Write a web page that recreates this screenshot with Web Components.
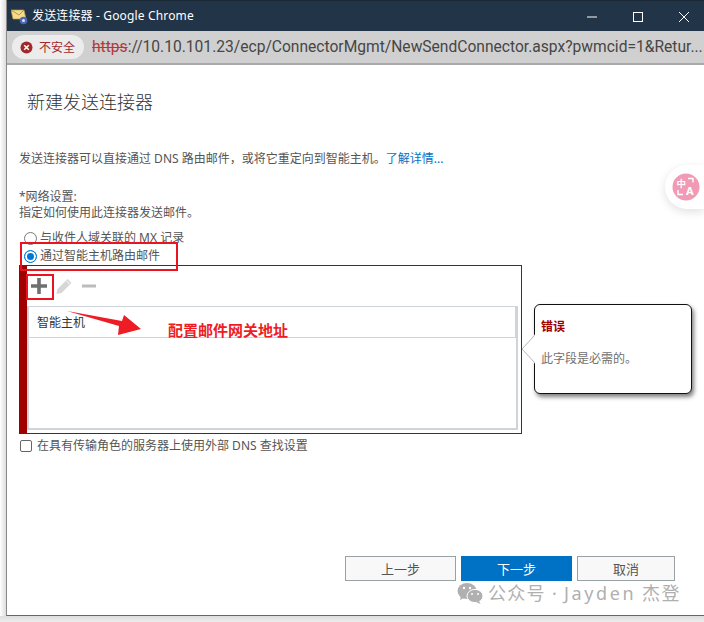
<!DOCTYPE html>
<html>
<head>
<meta charset="utf-8">
<style>
    html, body { margin: 0; padding: 0; background: #fff; }
    body { width: 704px; height: 622px; overflow: hidden; font-family: "Noto Sans CJK SC", "Noto Sans", sans-serif; }
</style>
</head>
<body>
<browser-window>
    <connector-form></connector-form>
</browser-window>

<script>
const CJK = `"Noto Sans", "Noto Sans CJK SC", sans-serif`;

class TitleBar extends HTMLElement {
    constructor() {
        super();
        this.attachShadow({ mode: 'open' });
    }

    connectedCallback() {
        this.shadowRoot.innerHTML = `
            <style>
                :host {
                    display: flex; align-items: center;
                    height: 31px; box-sizing: border-box;
                    background: #223447; border-top: 1px solid #1b2836;
                    color: #fff; font: 12px ${CJK};
                    padding-left: 4px; overflow: hidden;
                }
                .app { width: 17px; height: 17px; margin-right: 4px; flex: none; }
                .title { flex: 1; letter-spacing: 0.15px; padding-bottom: 3px; }
                .controls { display: flex; align-items: center; margin-right: -3px; }
                .controls svg { display: block; width: 46px; height: 30px; }
            </style>
            <svg class="app" viewBox="0 0 17 17">
                <path d="M0 2h13l2 9H2z" fill="#f4dc8c" stroke="#b59a4a" stroke-width=".7"/>
                <path d="M0 2l8 5 5-5" fill="none" stroke="#a58a3a" stroke-width=".8"/>
                <circle cx="12.5" cy="12.5" r="3.8" fill="#4d68b8"/>
                <circle cx="12.5" cy="12.5" r="1.5" fill="#dbe4f7"/>
            </svg>
            <span class="title">发送连接器 - Google Chrome</span>
            <div class="controls">
                <svg viewBox="0 0 46 30"><path d="M18 16h10" stroke="#fff" fill="none"/></svg>
                <svg viewBox="0 0 46 30"><rect x="18.5" y="11.5" width="9" height="9" stroke="#fff" fill="none"/></svg>
                <svg viewBox="0 0 46 30"><path d="M18 11l10 10M28 11l-10 10" stroke="#fff" fill="none"/></svg>
            </div>
        `;
    }
}
customElements.define('title-bar', TitleBar);

class AddressBar extends HTMLElement {
    constructor() {
        super();
        this.attachShadow({ mode: 'open' });
    }

    connectedCallback() {
        this.shadowRoot.innerHTML = `
            <style>
                :host {
                    display: flex; align-items: center;
                    height: 34px; box-sizing: border-box;
                    background: #d0d0d0; border-bottom: 2px solid #a9a9a9;
                    padding: 0 0 0 5px;
                    font: 15.6px Roboto, ${CJK}; color: #464646;
                    white-space: nowrap; overflow: hidden;
                }
                .chip {
                    display: flex; align-items: center; gap: 6px;
                    height: 24px; padding: 0 9px 0 8px; margin-right: 8px;
                    border-radius: 12px; background: #ececec; flex: none;
                    color: #a3282a; font: 12px ${CJK};
                }
                .chip svg { width: 13px; height: 13px; }
                s { color: #b23a3a; }
            </style>
            <span class="chip">
                <svg viewBox="0 0 13 13">
                    <circle cx="6.5" cy="6.5" r="6" fill="#a3282a"/>
                    <path d="M4.2 4.2l4.6 4.6M8.8 4.2l-4.6 4.6" stroke="#fff" stroke-width="1.5"/>
                </svg>
                不安全
            </span>
            <span><s>https</s>://10.10.101.23/ecp/ConnectorMgmt/NewSendConnector.aspx?pwmcid=1&amp;Retur...</span>
        `;
    }
}
customElements.define('address-bar', AddressBar);

class BrowserWindow extends HTMLElement {
    constructor() {
        super();
        this.attachShadow({ mode: 'open' });
    }

    connectedCallback() {
        this.shadowRoot.innerHTML = `
            <style>
                :host {
                    display: block; position: relative;
                    width: 704px; height: 622px;
                    background: #fff;
                }
                .frame {
                    margin-left: 6px; height: 616px; box-sizing: border-box;
                    display: flex; flex-direction: column;
                    background: #fff;
                    border-left: 1px solid #8a8a8a;
                    border-bottom: 1px solid #666;
                }
                .shade {
                    height: 6px; background: linear-gradient(#dedede, #ececec);
                }
                .page { flex: 1; position: relative; }
                .edge {
                    position: absolute; left: 0; top: 0; width: 6px; height: 616px;
                    background: linear-gradient(to right, #fff, #ddd);
                }
            </style>
            <div class="edge"></div>
            <div class="frame">
                <title-bar></title-bar>
                <address-bar></address-bar>
                <div class="page"><slot></slot></div>
            </div>
            <div class="shade"></div>
        `;
    }
}
customElements.define('browser-window', BrowserWindow);

class ErrorCallout extends HTMLElement {
    constructor() {
        super();
        this.attachShadow({ mode: 'open' });
    }

    connectedCallback() {
        this.shadowRoot.innerHTML = `
            <style>
                :host {
                    position: absolute; left: 527px; top: 239px;
                    display: block; box-sizing: border-box;
                    width: 158px; height: 90px; padding: 14px 6px;
                    background: #fff; border: 1px solid #111; border-radius: 6px;
                    box-shadow: 2px 3px 4px rgba(0,0,0,.5);
                    font: 12px/16px ${CJK}; color: #707070;
                }
                h4 { margin: 0 0 16px; font-size: 12px; line-height: 16px; font-weight: 700; color: #a00000; }
                p { margin: 0; }
                svg { position: absolute; left: -14px; top: 29px; width: 15px; height: 30px; }
            </style>
            <svg viewBox="0 0 15 30"><path d="M14 1L1 15l13 14" fill="#fff" stroke="#b5b5b5"/><path d="M14.5 0v30" stroke="#fff" stroke-width="1.5"/></svg>
            <h4>错误</h4>
            <p>此字段是必需的。</p>
        `;
    }
}
customElements.define('error-callout', ErrorCallout);

class HostsField extends HTMLElement {
    constructor() {
        super();
        this.attachShadow({ mode: 'open' });
    }

    connectedCallback() {
        this.shadowRoot.innerHTML = `
            <style>
                :host {
                    display: block; box-sizing: border-box;
                    width: 503px; height: 169px;
                    border: 1px solid #b00000; border-left: 8px solid #a00000;
                }
                .toolbar {
                    display: flex; align-items: center; gap: 7px;
                    height: 40px; padding-left: 3px;
                }
                .toolbar svg { width: 18px; height: 18px; display: block; }
                .table {
                    box-sizing: border-box; width: 491px; height: 124px;
                    border: 2px solid #ced4da; border-top-width: 1px; background: #fff;
                }
                .head {
                    box-sizing: border-box; height: 31px;
                    border-bottom: 1px solid #ced4da;
                    border-right: 1px solid #ced4da;
                    padding-left: 8px;
                    display: flex; align-items: center;
                    font: 12px ${CJK}; color: #333;
                }
            </style>
            <div class="toolbar">
                <svg viewBox="0 0 18 18"><path d="M9 1v16M1 9h16" stroke="#707070" stroke-width="3.6"/></svg>
                <svg viewBox="0 0 18 18">
                    <path d="M1.5 17l1-5L12.5 2l4 4-10 10z" fill="#d6d6d6"/>
                    <path d="M11 3.5l4 4" stroke="#fff"/>
                </svg>
                <svg viewBox="0 0 18 18"><path d="M2 9h14" stroke="#bcbcbc" stroke-width="3"/></svg>
            </div>
            <div class="table"><div class="head">智能主机</div></div>
        `;
    }
}
customElements.define('hosts-field', HostsField);

class WizardFooter extends HTMLElement {
    constructor() {
        super();
        this.attachShadow({ mode: 'open' });
    }

    connectedCallback() {
        this.shadowRoot.innerHTML = `
            <style>
                :host {
                    display: flex; gap: 5px;
                    position: absolute; left: 338px; top: 491px;
                }
                button {
                    box-sizing: border-box; width: 111px; height: 25px; padding: 0;
                    background: #f8f8f8; border: 1px solid #98a2a4;
                    font: 13px ${CJK}; color: #555;
                }
                .primary { background: #0072c6; border-color: #0072c6; color: #fff; }
                .cancel { width: 98px; }
            </style>
            <button>上一步</button>
            <button class="primary">下一步</button>
            <button class="cancel">取消</button>
        `;
    }
}
customElements.define('wizard-footer', WizardFooter);

class ConnectorForm extends HTMLElement {
    constructor() {
        super();
        this.attachShadow({ mode: 'open' });
    }

    connectedCallback() {
        this.shadowRoot.innerHTML = `
            <style>
                :host {
                    display: block; position: absolute; inset: 0;
                    padding: 0 0 0 12px;
                    font: 12px/16px ${CJK}; color: #555;
                }
                h1 { margin: 0; padding: 25px 0 0 8px; height: 86px; box-sizing: border-box; font: 300 18px/24px ${CJK}; color: #333; }
                .intro { margin: 0; height: 38px; }
                a { color: #0072c6; text-decoration: none; }
                .section { margin: 0; }
                .radios { padding: 8px 0 0 5px; }
                label { display: flex; align-items: center; height: 18px; }
                .radio {
                    box-sizing: border-box; width: 13px; height: 13px; margin-right: 3px;
                    border: 1px solid #777; border-radius: 50%; background: #fff;
                }
                .radio.on { border-color: #0078d7; box-shadow: inset 0 0 0 2px #fff; background: #0078d7; }
                .dns { display: flex; align-items: center; gap: 5px; margin: 5px 0 0 1px; height: 14px; }
                .box { box-sizing: border-box; width: 12px; height: 12px; border: 1px solid #666; border-radius: 2px; }
                /* review marks drawn over the screenshot */
                .mark { position: absolute; border: 2px solid #e8141f; box-sizing: border-box; }
                .note {
                    position: absolute; left: 161px; top: 255px;
                    font: 700 15px/20px ${CJK}; color: #ee1c25;
                }
                .arrow { position: absolute; left: 55px; top: 244px; width: 90px; height: 30px; }
                .mark.radio-mark { left: 13px; top: 177px; width: 158px; height: 29px; }
                .mark.add-mark { left: 19px; top: 209px; width: 28px; height: 26px; }
                .wm {
                    position: absolute; left: 450px; top: 516px;
                    display: flex; align-items: center; gap: 5px;
                    font: 18px/24px ${CJK}; color: #b0b0b0; letter-spacing: 1.3px;
                    white-space: nowrap;
                }
                .wm b { font-weight: 400; letter-spacing: 2.6px; }
                .wm svg { width: 26px; height: 22px; }
                .translate {
                    position: absolute; right: 0; top: 100px;
                    width: 39px; height: 44px; box-sizing: border-box;
                    padding: 8px 0 0 7px;
                    background: #fff; border-radius: 22px 0 0 22px;
                    box-shadow: 0 3px 10px rgba(0,0,0,.12);
                }
                .translate svg { width: 28px; height: 28px; display: block; }
            </style>
            <h1>新建发送连接器</h1>
            <p class="intro">发送连接器可以直接通过 DNS 路由邮件，或将它重定向到智能主机。<a>了解详情...</a></p>
            <p class="section">*网络设置:<br>指定如何使用此连接器发送邮件。</p>
            <div class="radios">
                <label><span class="radio"></span>与收件人域关联的 MX 记录</label>
                <label><span class="radio on"></span>通过智能主机路由邮件</label>
            </div>
            <hosts-field></hosts-field>
            <div class="dns"><span class="box"></span>在具有传输角色的服务器上使用外部 DNS 查找设置</div>

            <error-callout></error-callout>
            <wizard-footer></wizard-footer>

            <div class="mark radio-mark"></div>
            <div class="mark add-mark"></div>
            <svg class="arrow" viewBox="0 0 90 30">
                <path d="M5 2L60 12 62 6 79 20 56 26 57 17z" fill="#ee1c25"/>
            </svg>
            <div class="note">配置邮件网关地址</div>

            <div class="translate">
                <svg viewBox="0 0 28 28">
                    <circle cx="14" cy="14" r="13.5" fill="#f09ab5"/>
                    <text x="4.5" y="14" font-size="9.5" font-weight="700" fill="#fff" font-family="Noto Sans CJK SC">中</text>
                    <text x="14" y="22" font-size="11" font-weight="700" fill="#fff" font-family="Noto Sans">A</text>
                    <path d="M16 5.5h5v4M6 17v4.5h5" fill="none" stroke="#fff" stroke-width="1.4"/>
                </svg>
            </div>
            <div class="wm">
                <svg viewBox="0 0 26 22">
                    <ellipse cx="10" cy="9" rx="9.5" ry="8" fill="#b0b0b0"/>
                    <path d="M4 14l-1 4 5-2.5z" fill="#b0b0b0"/>
                    <ellipse cx="18" cy="14" rx="8" ry="6.6" fill="#b0b0b0" stroke="#fff"/>
                    <path d="M22 19l1.5 3-4.5-2z" fill="#b0b0b0"/>
                    <circle cx="7" cy="6" r="1.2" fill="#fff"/><circle cx="13" cy="6" r="1.2" fill="#fff"/>
                    <circle cx="15" cy="12" r="1" fill="#fff"/><circle cx="21" cy="12" r="1" fill="#fff"/>
                </svg>
                <span>公众号 · <b>Jayden</b> 杰登</span>
            </div>
        `;
    }
}
customElements.define('connector-form', ConnectorForm);
</script>
</body>
</html>
